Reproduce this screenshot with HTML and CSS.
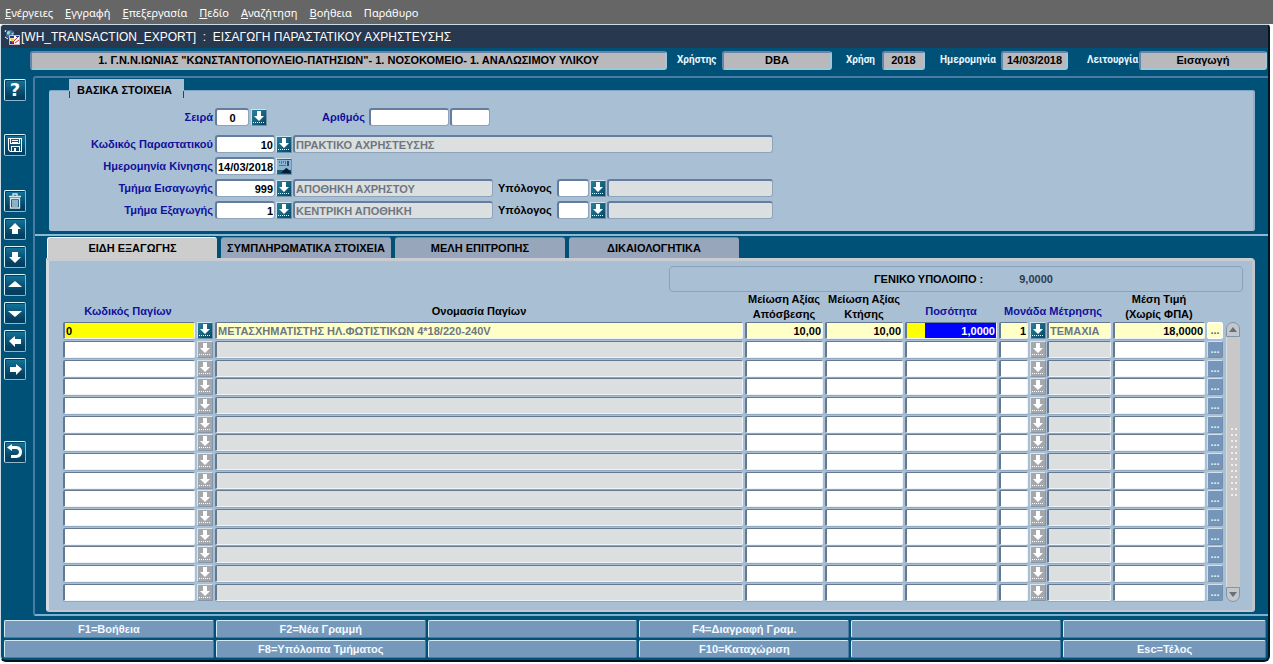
FILE: index.html
```
<!DOCTYPE html>
<html lang="el">
<head>
<meta charset="utf-8">
<title>ΕΙΣΑΓΩΓΗ ΠΑΡΑΣΤΑΤΙΚΟΥ ΑΧΡΗΣΤΕΥΣΗΣ</title>
<link rel="stylesheet" href="styles.css">
</head>
<body>
<svg class="sprite" aria-hidden="true">
  <symbol id="lov" viewBox="0 0 14 15"><path d="M5 1h4v5h3l-5 5-5-5h3z"/><path d="M1 12h1v1H1zM3 12h1v1H3zM5 12h1v1H5zM7 12h1v1H7zM9 12h1v1H9zM11 12h1v1h-1z"/></symbol>
  <symbol id="up" viewBox="0 0 20 20"><path d="M10 4l6 6h-3v5H7v-5H4z"/></symbol>
  <symbol id="down" viewBox="0 0 20 20"><path d="M10 16l-6-6h3V5h6v5h3z"/></symbol>
  <symbol id="left" viewBox="0 0 20 20"><path d="M4 10l6-5v3h6v5h-6v3z"/></symbol>
  <symbol id="right" viewBox="0 0 20 20"><path d="M17 10l-6-5v3H5v5h6v3z"/></symbol>
  <symbol id="page-up" viewBox="0 0 20 20"><path d="M3 12l7-6 7 6z"/></symbol>
  <symbol id="page-down" viewBox="0 0 20 20"><path d="M3 8l7 6 7-6z"/></symbol>
  <symbol id="save" viewBox="0 0 20 20"><path fill-rule="evenodd" d="M3 3h14v14H5l-2-2zM4 4v10.600l1.400 1.400H6v-5h9v5h1V4h-1v5H5V4zM6 4v4h8V4zM7 12v4h2v-3h2v3h3v-4z"/><path d="M7 5h6v1H7zM7 7h6v1H7z"/></symbol>
  <symbol id="trash" viewBox="0 0 20 20"><path d="M8 5V3h4v2M4 5.500h12M5 7.500h10M5.500 8v9h9V8M8 9v7M10 9v7M12 9v7" fill="none" stroke="#d5e8ee" stroke-width="1.300"/></symbol>
  <symbol id="undo" viewBox="0 0 20 20"><path d="M7 2v2h4c8 0 8 12 0 12H6v-3h5c4 0 4-6 0-6H7v2L2 5.500z"/></symbol>
</svg>

<nav class="menu" aria-label="Κύριο μενού">
  <a href="#"><u>Ε</u>νέργειες</a>
  <a href="#"><u>Ε</u>γγραφή</a>
  <a href="#"><u>Ε</u>πεξεργασία</a>
  <a href="#"><u>Π</u>εδίο</a>
  <a href="#"><u>Α</u>ναζήτηση</a>
  <a href="#"><u>Β</u>οήθεια</a>
  <a href="#">Παράθυρο</a>
</nav>

<div class="window">
  <header class="titlebar">
    <svg class="app-icon" viewBox="0 0 16 16" aria-hidden="true">
      <circle cx="6" cy="5" r="4" fill="#3b6f9d"/><path d="M3 3c2-2 4-1 3 1S4 6 3 5zM7 5l3-2-1 3z" fill="#9bd4c8"/>
      <path d="M1 3l1-2M1 8l3 2" stroke="#fff"/>
      <path d="M5.500 6.500h10v9h-10z" fill="#fff" stroke="#c9b9cc"/>
      <path d="M6 7h4v2H6zM12 7h3v1h-3zM6 12h4v3H6z" fill="#283a90"/><path d="M6 9l5 1-3 3z" fill="#e8cf2b"/>
      <path d="M8 14l6-6M11 14l4-3" stroke="#d2303c"/>
    </svg>
    <h1>[WH_TRANSACTION_EXPORT] &nbsp;: &nbsp;ΕΙΣΑΓΩΓΗ ΠΑΡΑΣΤΑΤΙΚΟΥ ΑΧΡΗΣΤΕΥΣΗΣ</h1>
  </header>

  <div class="status">
    <input class="status-field unit" aria-label="Μονάδα" readonly value="1. Γ.Ν.Ν.ΙΩΝΙΑΣ &quot;ΚΩΝΣΤΑΝΤΟΠΟΥΛΕΙΟ-ΠΑΤΗΣΙΩΝ&quot;- 1. ΝΟΣΟΚΟΜΕΙΟ- 1. ΑΝΑΛΩΣΙΜΟΥ ΥΛΙΚΟΥ">
    <label class="user-label" for="user">Χρήστης</label><input class="status-field user" id="user" readonly value="DBA">
    <label class="year-label" for="year">Χρήση</label><input class="status-field year" id="year" readonly value="2018">
    <label class="today-label" for="today">Ημερομηνία</label><input class="status-field today" id="today" readonly value="14/03/2018">
    <label class="mode-label" for="mode">Λειτουργία</label><input class="status-field mode" id="mode" readonly value="Εισαγωγή">
  </div>

  <div class="workspace">
    <div class="toolbar" role="toolbar" aria-label="Εργαλεία">
      <button class="tool tool-help" aria-label="Βοήθεια">?</button>
      <button class="tool tool-save" aria-label="Αποθήκευση"><svg><use href="#save"/></svg></button>
      <button class="tool" aria-label="Διαγραφή"><svg><use href="#trash"/></svg></button>
      <button class="tool" aria-label="Προηγούμενη εγγραφή"><svg><use href="#up"/></svg></button>
      <button class="tool" aria-label="Επόμενη εγγραφή"><svg><use href="#down"/></svg></button>
      <button class="tool" aria-label="Σελίδα πάνω"><svg><use href="#page-up"/></svg></button>
      <button class="tool" aria-label="Σελίδα κάτω"><svg><use href="#page-down"/></svg></button>
      <button class="tool" aria-label="Προηγούμενο πεδίο"><svg><use href="#left"/></svg></button>
      <button class="tool tool-next" aria-label="Επόμενο πεδίο"><svg><use href="#right"/></svg></button>
      <button class="tool" aria-label="Επιστροφή"><svg><use href="#undo"/></svg></button>
    </div>

    <main class="frame">
      <section class="basics">
        <h2 class="basics-title">ΒΑΣΙΚΑ ΣΤΟΙΧΕΙΑ</h2>
        <div class="form-row form-row-first">
          <label class="main-label" for="series">Σειρά</label>
          <input class="field w-s center" id="series" value="0">
          <button class="lov spaced" aria-label="Λίστα σειρών"><svg><use href="#lov"/></svg></button>
          <label class="number-label" for="number">Αριθμός</label>
          <input class="field w-number" id="number">
          <input class="field w-suffix" aria-label="Αριθμός, συμπλήρωμα">
        </div>
        <div class="form-row">
          <label class="main-label" for="doc">Κωδικός Παραστατικού</label>
          <input class="field w-m right" id="doc" value="10">
          <button class="lov" aria-label="Λίστα παραστατικών"><svg><use href="#lov"/></svg></button>
          <input class="field info w-doc" aria-label="Περιγραφή παραστατικού" readonly value="ΠΡΑΚΤΙΚΟ ΑΧΡΗΣΤΕΥΣΗΣ">
        </div>
        <div class="form-row">
          <label class="main-label" for="date">Ημερομηνία Κίνησης</label>
          <input class="field w-m right" id="date" value="14/03/2018">
          <button class="lov" aria-label="Ημερολόγιο"><svg viewBox="0 0 14 15"><path fill="#8db3d0" d="M0 1h14v10H0z"/><path fill="#4d7598" d="M2 2h1v2H2zM4 2h1v3H4zM6 2h1v2H6zM8 2h1v3H8zM2 6h7v1H2z"/><path fill="#254d74" d="M10 2h2v5h-2z"/><path fill="#031d33" d="M4 14l5-5 2 1 3 4z"/></svg></button>
        </div>
        <div class="form-row">
          <label class="main-label" for="dept-in">Τμήμα Εισαγωγής</label>
          <input class="field w-m right" id="dept-in" value="999">
          <button class="lov" aria-label="Λίστα τμημάτων εισαγωγής"><svg><use href="#lov"/></svg></button>
          <input class="field info w-dept" aria-label="Όνομα τμήματος εισαγωγής" readonly value="ΑΠΟΘΗΚΗ ΑΧΡΗΣΤΟΥ">
          <label class="person-label" for="person-in">Υπόλογος</label>
          <input class="field w-xs" id="person-in">
          <button class="lov" aria-label="Λίστα υπολόγων εισαγωγής"><svg><use href="#lov"/></svg></button>
          <input class="field info w-person" aria-label="Όνομα υπολόγου εισαγωγής" readonly>
        </div>
        <div class="form-row">
          <label class="main-label" for="dept-out">Τμήμα Εξαγωγής</label>
          <input class="field w-m right" id="dept-out" value="1">
          <button class="lov" aria-label="Λίστα τμημάτων εξαγωγής"><svg><use href="#lov"/></svg></button>
          <input class="field info w-dept" aria-label="Όνομα τμήματος εξαγωγής" readonly value="ΚΕΝΤΡΙΚΗ ΑΠΟΘΗΚΗ">
          <label class="person-label" for="person-out">Υπόλογος</label>
          <input class="field w-xs" id="person-out">
          <button class="lov" aria-label="Λίστα υπολόγων εξαγωγής"><svg><use href="#lov"/></svg></button>
          <input class="field info w-person" aria-label="Όνομα υπολόγου εξαγωγής" readonly>
        </div>
      </section>

      <section class="details">
        <div class="tabs" role="tablist">
          <button class="tab active" role="tab" aria-selected="true">ΕΙΔΗ ΕΞΑΓΩΓΗΣ</button>
          <button class="tab" role="tab" aria-selected="false">ΣΥΜΠΛΗΡΩΜΑΤΙΚΑ ΣΤΟΙΧΕΙΑ</button>
          <button class="tab" role="tab" aria-selected="false">ΜΕΛΗ ΕΠΙΤΡΟΠΗΣ</button>
          <button class="tab" role="tab" aria-selected="false">ΔΙΚΑΙΟΛΟΓΗΤΙΚΑ</button>
        </div>
        <div class="sheet" role="tabpanel">
          <div class="total"><span class="total-label">ΓΕΝΙΚΟ ΥΠΟΛΟΙΠΟ :</span><output class="total-value">9,0000</output></div>
          <div class="grid-area">
            <table class="grid">
              <colgroup><col class="c-code"><col><col class="c-value"><col class="c-value"><col class="c-qty"><col class="c-unit"><col class="c-qty"><col class="c-more"></colgroup>
              <thead>
                <tr>
                  <th class="key single code-head">Κωδικός Παγίων</th>
                  <th class="single">Ονομασία Παγίων</th>
                  <th>Μείωση Αξίας<br>Απόσβεσης</th>
                  <th>Μείωση Αξίας<br>Κτήσης</th>
                  <th class="key single">Ποσότητα</th>
                  <th class="key single unit-head">Μονάδα Μέτρησης</th>
                  <th>Μέση Τιμή<br>(Χωρίς ΦΠΑ)</th>
                  <td></td>
                </tr>
              </thead>
              <tbody id="rows"></tbody>
            </table>
            <div class="scrollbar">
              <button class="scroll-end scroll-up" aria-label="Κύλιση πάνω"><svg viewBox="0 0 8 5"><path d="M0 5l4-5 4 5z"/></svg></button>
              <div class="track"><span class="grip"></span></div>
              <button class="scroll-end scroll-down" aria-label="Κύλιση κάτω"><svg viewBox="0 0 8 5"><path d="M0 0l4 5 4-5z"/></svg></button>
            </div>
          </div>
        </div>
      </section>
    </main>
  </div>

  <footer class="keys">
    <button class="key-button">F1=Βοήθεια</button>
    <button class="key-button">F2=Νέα Γραμμή</button>
    <button class="key-button" aria-label="F3"></button>
    <button class="key-button">F4=Διαγραφή Γραμ.</button>
    <button class="key-button" aria-label="F5"></button>
    <button class="key-button" aria-label="F6"></button>
    <button class="key-button" aria-label="F7"></button>
    <button class="key-button">F8=Υπόλοιπα Τμήματος</button>
    <button class="key-button" aria-label="F9"></button>
    <button class="key-button">F10=Καταχώριση</button>
    <button class="key-button" aria-label="F11"></button>
    <button class="key-button">Esc=Τέλος</button>
  </footer>
</div>
<script src="rows.js"></script>
</body>
</html>
```
FILE: styles.css
```
* { box-sizing: border-box; }

body {
  margin: 0;
  background: #fff;
  font: bold 11px/14px "Liberation Sans", Arial, sans-serif;
  color: #000;
}

button, input { font: inherit; color: inherit; margin: 0; padding: 0; border-radius: 0; }
button { cursor: pointer; }
h1, h2 { margin: 0; font: inherit; }
.sprite { display: none; }

.menu {
  display: flex;
  gap: 12px;
  height: 24px;
  padding: 2px 5px 0;
  align-items: center;
  background: #666;
  font: 11px/22px "Noto Sans", sans-serif;
}
.menu a { color: #fff; text-decoration: none; }

.window {
  margin: 0 3px 0 0;
  background: #005178;
  border: 1px solid #c9dbe6;
  border-right: 2px solid #04141f;
  border-bottom: 2px solid #04141f;
  border-radius: 4px 4px 6px 6px;
}

.titlebar {
  display: flex;
  align-items: center;
  gap: 1px;
  height: 23px;
  padding-left: 3px;
  background: #27384f;
  border-radius: 4px 4px 0 0;
  color: #fff;
}
.titlebar h1 { font-size: 12px; font-weight: normal; }
.app-icon { width: 16px; height: 16px; }

.status {
  display: flex;
  align-items: center;
  height: 28px;
  padding: 0 1px 4px 29px;
}
.status label {
  flex: none;
  font: bold 10px/14px Roboto, sans-serif;
  color: #e9f6ff;
  white-space: nowrap;
}
.user-label { width: 45px; }
.year-label { width: 36px; }
.today-label { width: 61px; }
.mode-label { width: 52px; }
.status-field {
  height: 19px;
  min-width: 0;
  background: #b9b9bb;
  border: 2px solid #6685ab;
  border-right-color: #9ec7dc;
  border-bottom-color: #9ec7dc;
  border-radius: 3px;
  text-align: center;
}
.unit { flex: 1; margin-right: 10px; }
.user { width: 110px; margin-right: 14px; }
.year { width: 43px; margin-right: 15px; }
.today { width: 67px; margin-right: 19px; }
.mode { width: 128px; }

.workspace { display: flex; }

.toolbar {
  display: flex;
  flex-direction: column;
  gap: 6px;
  flex: none;
  width: 32px;
  padding: 3px 0 0 3px;
}
.tool {
  display: grid;
  place-items: center;
  width: 22px;
  height: 22px;
  background: linear-gradient(#13759a, #053f60 80%);
  border: 1px solid #d9f3fb;
  border-right-color: #8db7cf;
  border-bottom-color: #8db7cf;
  border-radius: 2px;
  box-shadow: inset 1px 1px #06405f;
  color: #fff;
}
.tool svg { width: 20px; height: 20px; fill: #fff; }
.tool-help { margin-bottom: 27px; font: bold 18px/20px "DejaVu Sans", sans-serif; }
.tool-save { margin-bottom: 28px; }
.tool-next { margin-bottom: 55px; }

.frame {
  flex: 1;
  min-width: 0;
  border: 2px solid #4a7ba0;
  border-right: 0;
  border-bottom-color: #7fb0cf;
  border-radius: 3px 0 0 3px;
}

.basics {
  position: relative;
  margin: 12px 13px 3px 14px;
  padding: 17px 0 12px;
  background: #a9bfd4;
  border-top: 1px solid #7fa3c2;
  border-right: 2px solid #8fb0c8;
  border-radius: 2px;
}
.basics-title {
  position: absolute;
  top: -12px;
  left: 20px;
  padding: 4px 12px 2px 8px;
  background: #a9bfd4;
}
.basics-title::before, .basics-title::after {
  content: "";
  position: absolute;
  top: 12px;
  width: 1px;
  height: 7px;
  background: #005178;
}
.basics-title::before { left: 0; }
.basics-title::after { right: 0; }

.form-row { display: flex; align-items: center; margin-bottom: 4px; }
.form-row:last-child { margin-bottom: 0; }
.form-row-first { margin-bottom: 9px; }
.main-label { width: 164px; margin-right: 2px; text-align: right; color: #10109c; }
.number-label { width: 45px; margin: 0 2px 0 54px; color: #10109c; }
.person-label { width: 54px; margin: 0 5px; }

.field {
  display: block;
  height: 18px;
  min-width: 0;
  padding: 0 1px;
  background: #fff;
  border: 2px solid #647c9e;
  border-right: 1px solid #8fa4bb;
  border-bottom: 1px solid #8fa4bb;
  border-radius: 3px;
}
.field.info { background: #dcdfdf; color: #6d7781; }
.w-xs { width: 32px; }
.w-s { width: 34px; }
.w-m { width: 60px; }
.w-number { width: 80px; }
.w-suffix { width: 40px; margin-left: 1px; }
.w-doc { width: 480px; }
.w-dept { width: 200px; }
.w-person { width: 166px; }
.center { text-align: center; }
.right { text-align: right; }

.lov {
  flex: none;
  width: 16px;
  height: 17px;
  margin: 0 1px;
  background: linear-gradient(135deg, #26839a, #084663);
  border: 1px solid #cfe3ee;
  border-right-color: #6f93ad;
  border-bottom-color: #6f93ad;
}
.lov.spaced { margin-left: 2px; }
.lov svg { display: block; width: 14px; height: 15px; fill: #fff; }

.details {
  padding: 1px 13px 2px 11px;
  border-top: 2px solid #8fb8d2;
}
.tabs { display: flex; gap: 4px; padding-left: 1px; }
.tab {
  width: 170px;
  height: 21px;
  background: #97a6bb;
  border: 0;
  border-top: 1px solid #6c87a3;
  border-radius: 3px 3px 0 0;
  white-space: nowrap;
}
.tab.active { background: #cdcdcd; border-top: 1px solid #fff; border-left: 1px solid #fff; }

.sheet {
  padding: 5px 9px 8px 14px;
  background: #a9bfd4;
  border-top: 3px solid #c9cdd2;
  border-left: 3px solid #d5dbe0;
  border-right: 3px solid #bfc6ce;
  border-bottom: 2px solid #c2c8ce;
  border-radius: 0 4px 3px 3px;
}
.total {
  display: flex;
  align-items: center;
  width: 574px;
  height: 26px;
  margin-left: auto;
  padding-left: 204px;
  border: 1px solid #8ba3ba;
  border-radius: 4px;
}
.total-value { margin-left: 36px; color: #2c3a4c; }

.grid-area { display: flex; align-items: flex-end; gap: 3px; padding-right: 3px; }
.grid { flex: 1; width: 100%; table-layout: fixed; border-collapse: collapse; }
.c-code { width: 152px; }
.c-value { width: 80px; }
.c-qty { width: 94px; }
.c-unit { width: 114px; }
.c-more { width: 16px; }
.grid th { height: 30px; padding: 0 2px 0 0; vertical-align: bottom; line-height: 15px; white-space: nowrap; }
.grid th.single { padding-bottom: 3px; }
.grid th.key { color: #10109c; }
.grid th.code-head { padding-right: 22px; }
.grid th.unit-head { padding-right: 6px; }
.grid td { padding: 0; }
.grid tbody td { height: 18px; padding: 0 2px 1px 0; }
.grid tbody tr:nth-child(3n + 1) td { padding-bottom: 2px; }
.grid tbody tr:nth-child(3n + 2) td { padding-bottom: 2px; }
.grid tbody td.more-cell { padding-right: 0; }
.pair { display: flex; gap: 2px; }
.cell {
  display: block;
  width: 100%;
  height: 17px;
  padding: 0 1px;
  background: #fff;
  border: 1px solid #64788f;
  border-left-width: 2px;
  border-right-color: #eef4f8;
  border-bottom-color: #eef4f8;
  border-radius: 2px;
  box-shadow: 0 1px #8fa8c0;
}
.cell.info { background: #dcdfdf; color: #6d7781; }
.cell.number { text-align: right; }
.cell.code { flex: 1; }
.cell.unit-code { flex: none; width: 29px; }
.pair .lov { height: 17px; margin: 0; }
.pair.tight .cell.info { margin-left: -1px; }
.lov.idle { background: #a4a8ad; border-color: #dde5ec #8496aa #8496aa #dde5ec; }
.current .cell { background: #ffffc8; }
.current .cell.code { background: #ff0; }
.current .cell.qty { background: linear-gradient(to right, #ff0 18px, #00f 18px); color: #fff; }
.more {
  display: block;
  width: 16px;
  height: 17px;
  background: #7596b9;
  border: 1px solid #d2e1ed;
  border-right-color: #6f8ead;
  border-bottom-color: #6f8ead;
  border-radius: 2px;
  color: #e6f0f8;
  line-height: 15px;
}
.current .more { background: #ffffc8; color: #59656e; border-color: #fff; }

.scrollbar { display: flex; flex-direction: column; width: 14px; height: 280px; }
.scroll-end {
  display: grid;
  place-items: center;
  flex: none;
  height: 15px;
  background: #c3c8cd;
  border: 1px solid #8494a4;
}
.scroll-end svg { width: 8px; height: 5px; fill: #66707b; }
.scroll-up { border-radius: 7px 7px 0 0; }
.scroll-down { border-radius: 0 0 7px 7px; }
.track { flex: 1; display: grid; place-items: center; background: #c8c8c9; border-left: 1px solid #d8dde2; }
.grip {
  width: 8px;
  height: 72px;
  background: radial-gradient(circle, #eee 1px, transparent 1px) 0 0 / 4px 6px;
}

.keys {
  display: grid;
  grid-template-columns: repeat(5, 210fr) 203fr;
  gap: 2px;
  padding: 4px 2px 2px 3px;
}
.key-button {
  min-width: 0;
  height: 18px;
  background: #7698ba;
  border: 1px solid #d4ebf7;
  border-right-color: #4e7aa0;
  border-bottom-color: #4e7aa0;
  border-radius: 2px;
  color: #f2faff;
}
```
FILE: rows.js
```
const ROW_COUNT = 15;
const first = {
  code: "0",
  name: "ΜΕΤΑΣΧΗΜΑΤΙΣΤΗΣ ΗΛ.ΦΩΤΙΣΤΙΚΩΝ 4*18/220-240V",
  depreciation: "10,00",
  acquisition: "10,00",
  quantity: "1,0000",
  unitCode: "1",
  unit: "ΤΕΜΑΧΙΑ",
  price: "18,0000"
};

const input = (cls, label, value, attrs = "") =>
  `<input class="cell ${cls}" aria-label="${label}" value="${value || ""}" ${attrs}>`;
const lov = (label, idle) =>
  `<button class="lov${idle ? " idle" : ""}" aria-label="${label}"><svg><use href="#lov"/></svg></button>`;

let html = "";
for (let i = 0; i < ROW_COUNT; i++) {
  const r = i === 0 ? first : {};
  const n = i + 1;
  html += `<tr${i === 0 ? ' class="current"' : ""}>
    <td><div class="pair">${input("code", "Κωδικός παγίου " + n, r.code)}${lov("Λίστα παγίων " + n, i > 0)}</div></td>
    <td>${input("info", "Ονομασία παγίου " + n, r.name, "readonly")}</td>
    <td>${input("number", "Μείωση αξίας απόσβεσης " + n, r.depreciation)}</td>
    <td>${input("number", "Μείωση αξίας κτήσης " + n, r.acquisition)}</td>
    <td>${input("number qty", "Ποσότητα " + n, r.quantity)}</td>
    <td><div class="pair tight">${input("number unit-code", "Μονάδα μέτρησης " + n, r.unitCode)}${lov("Λίστα μονάδων " + n, i > 0)}${input("info", "Ονομασία μονάδας " + n, r.unit, "readonly")}</div></td>
    <td>${input("number", "Μέση τιμή " + n, r.price)}</td>
    <td class="more-cell"><button class="more" aria-label="Περισσότερα ${n}">...</button></td>
  </tr>`;
}
document.getElementById("rows").innerHTML = html;
```
